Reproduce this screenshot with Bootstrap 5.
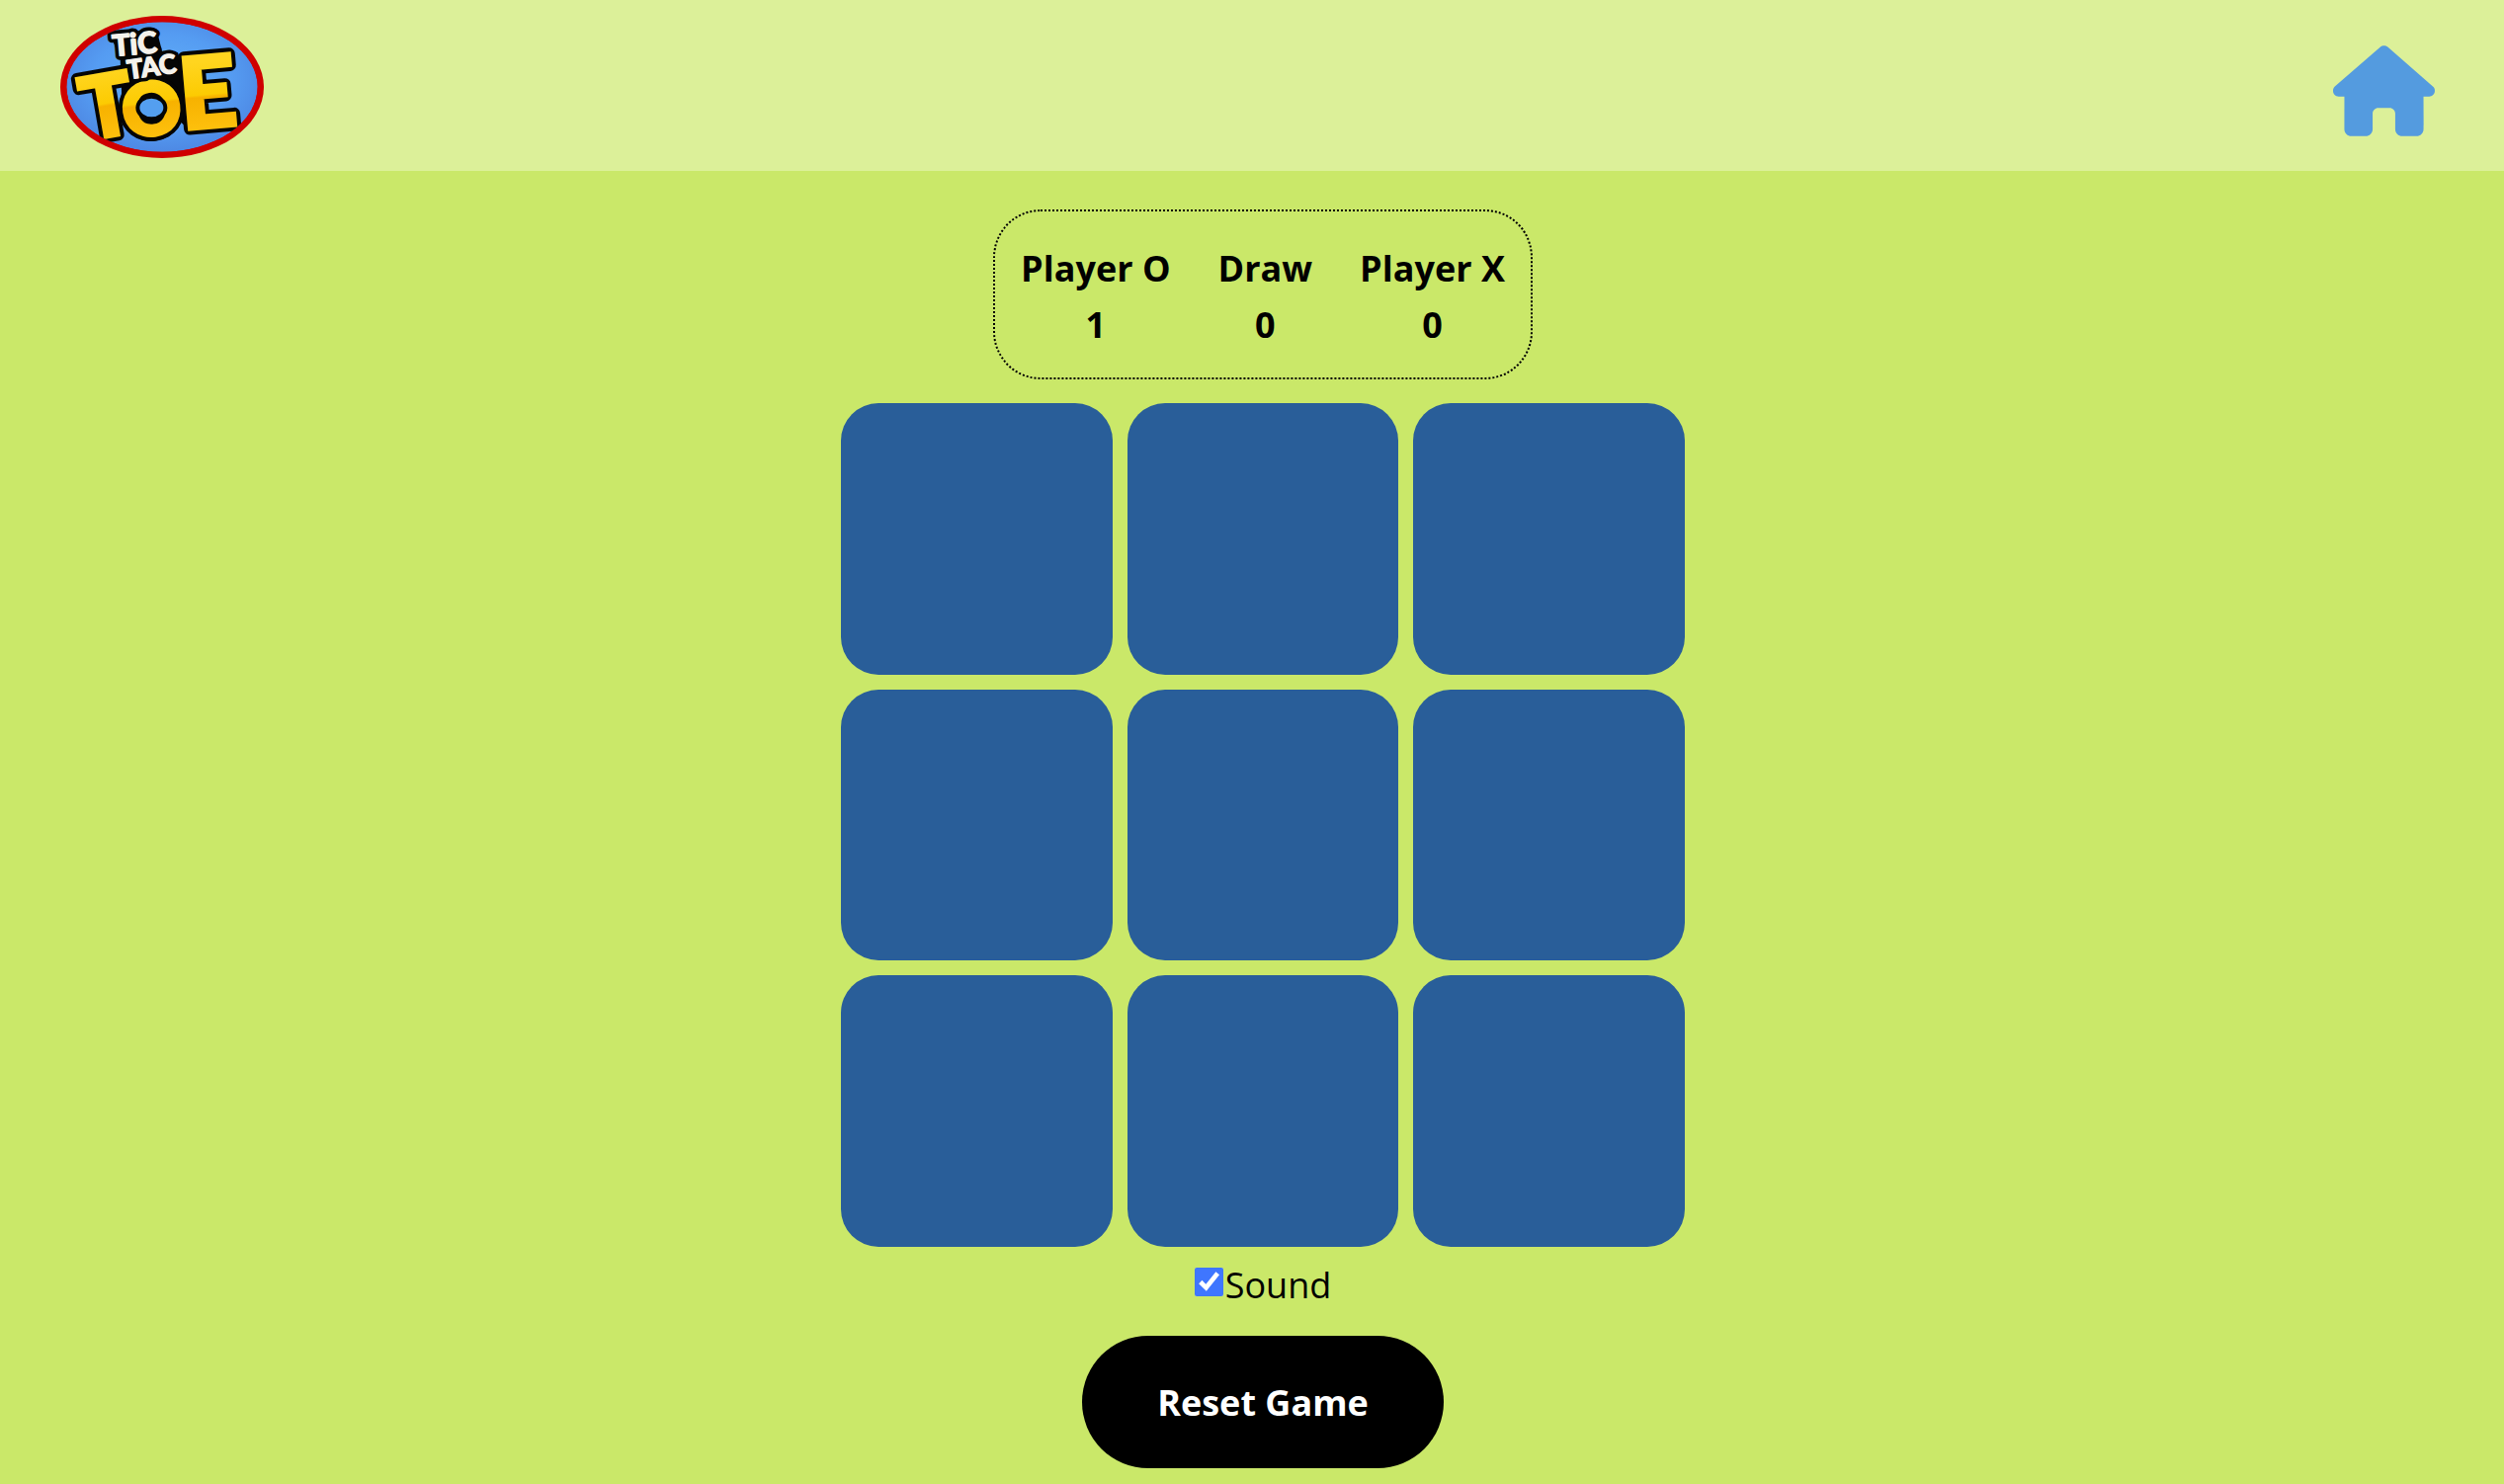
<!DOCTYPE html>
<html lang="en">
<head>
<meta charset="utf-8">
<meta name="viewport" content="width=device-width, initial-scale=1">
<title>Tic Tac Toe</title>
<link href="https://cdn.jsdelivr.net/npm/bootstrap@5.3.0/dist/css/bootstrap.min.css" rel="stylesheet">
<style>
  body { background: #cae869; color: #000; font-family: "Open Sans", "Noto Sans", sans-serif; font-size: 36px; line-height: 57px; }
  .top-bar { background: #dcf099; padding: 16px 70px 13px 61px; }
  .logo-badge { width: 206px; height: 144px; }
  .home-link { padding-top: 8px; }
  .home-icon { width: 103px; height: 92px; fill: #549bdf; }
  .game { padding: 39px 0 16px 22px; }
  .score-box { border: 2px dotted #000; border-radius: 48px; padding: 29px 2px 25px; margin-bottom: 24px; }
  .score-table { font-weight: 700; text-align: center; }
  .score-table th, .score-table td { padding: 0 24px; }
  .board { width: 854px; max-width: 100%; gap: 15px; grid-template-columns: repeat(3, 1fr); }
  .cell { aspect-ratio: 1; border: 0; border-radius: 38px; background: #295e99; }
  .sound-row { padding: 10px 0 23px; }
  .sound-check { width: 29px; height: 29px; margin: 11px 2px 0 0; accent-color: #3f76ff; }
  .reset { background: #000; color: #fff; font-weight: 700; font-size: 36px; line-height: 54px; padding: 41px 76px 39px; border: 0; }
  .reset:hover { background: #222; color: #fff; }
</style>
</head>
<body>
<header class="top-bar d-flex justify-content-between align-items-center">
  <a href="#" class="d-flex" aria-label="Tic Tac Toe">
    <svg class="logo-badge" viewBox="63 48 618 432" font-family="Lato, sans-serif" font-weight="900" text-anchor="middle">
      <defs>
        <radialGradient id="sky" cx=".5" cy=".45" r=".6"><stop offset="0" stop-color="#62b0f8"/><stop offset=".6" stop-color="#559cf2"/><stop offset="1" stop-color="#4c84e0"/></radialGradient>
        <linearGradient id="gold" gradientUnits="userSpaceOnUse" x1="0" y1="-200" x2="0" y2="0"><stop offset="0" stop-color="#ffd51f"/><stop offset=".5" stop-color="#fccb02"/><stop offset=".54" stop-color="#f7b200"/><stop offset="1" stop-color="#fdbf0c"/></linearGradient>
        <clipPath id="oval"><ellipse cx="372" cy="264" rx="290" ry="197"/></clipPath>
      </defs>
      <ellipse cx="372" cy="264" rx="309" ry="216" fill="#cf0000"/>
      <g clip-path="url(#oval)">
        <ellipse cx="372" cy="264" rx="290" ry="197" fill="url(#sky)"/>
        <path d="M215 105L355 88 372 155 420 160 450 390 350 300 250 300 245 180Z" fill="#050505"/>
        <g stroke="#050505" stroke-width="36" stroke-linejoin="round" fill="#050505">
          <text transform="translate(220 412) rotate(-10)" font-size="260">T</text>
          <text transform="translate(519 386) rotate(-5)" font-size="300">E</text>
          <text transform="translate(351 408) rotate(-8)" font-size="220">O</text>
        </g>
        <g fill="url(#gold)" stroke="url(#gold)" stroke-width="12" stroke-linejoin="miter">
          <text transform="translate(220 412) rotate(-10)" font-size="260">T</text>
          <text transform="translate(519 386) rotate(-5)" font-size="300">E</text>
          <text transform="translate(351 408) rotate(-8)" font-size="220" stroke="#050505" stroke-width="34" paint-order="stroke">O</text>
          <text transform="translate(351 408) rotate(-8)" font-size="220">O</text>
        </g>
        <ellipse cx="340" cy="327" rx="42" ry="34" fill="#549ff0" stroke="#050505" stroke-width="12"/>
        <g fill="#f5f2ec" stroke-linejoin="round">
          <g stroke="#050505" stroke-width="26">
            <text transform="translate(291 165) rotate(-5)" font-size="90">TiC</text>
            <text transform="translate(344 230) rotate(-8)" font-size="80">TAC</text>
          </g>
          <g stroke="#f5f2ec" stroke-width="4">
            <text transform="translate(291 165) rotate(-5)" font-size="90">TiC</text>
            <text transform="translate(344 230) rotate(-8)" font-size="80">TAC</text>
          </g>
        </g>
      </g>
    </svg>
  </a>
  <a href="#" class="home-link d-flex" aria-label="Home">
    <svg class="home-icon" viewBox="0 0 576 512"><path d="M575.8 255.5c0 18-15 32.1-32 32.1h-32l.7 160.2c0 2.700-.2 5.400-.5 8.100V472c0 22.100-17.900 40-40 40H456c-1.100 0-2.200 0-3.300-.1c-1.400 .1-2.800 .1-4.200 .1H416 392c-22.100 0-40-17.900-40-40V448 384c0-17.700-14.300-32-32-32H256c-17.700 0-32 14.300-32 32v64 24c0 22.100-17.900 40-40 40H160 128.100c-1.500 0-3-.1-4.500-.2c-1.200 .1-2.400 .2-3.600 .2H104c-22.100 0-40-17.900-40-40V360c0-.9 0-1.900 .1-2.800V287.600H32c-18 0-32-14-32-32.100c0-9 3-17 10-24L266.400 8c7-7 15-8 22-8s15 2 21 7L564.800 231.500c8 7 12 15 11 24z"/></svg>
  </a>
</header>
<main class="game d-flex flex-column align-items-center">
  <div class="score-box">
    <table class="score-table">
      <thead><tr><th scope="col">Player O</th><th scope="col">Draw</th><th scope="col">Player X</th></tr></thead>
      <tbody><tr><td>1</td><td>0</td><td>0</td></tr></tbody>
    </table>
  </div>
  <div class="board d-grid">
    <button type="button" class="cell" aria-label="Cell 1"></button>
    <button type="button" class="cell" aria-label="Cell 2"></button>
    <button type="button" class="cell" aria-label="Cell 3"></button>
    <button type="button" class="cell" aria-label="Cell 4"></button>
    <button type="button" class="cell" aria-label="Cell 5"></button>
    <button type="button" class="cell" aria-label="Cell 6"></button>
    <button type="button" class="cell" aria-label="Cell 7"></button>
    <button type="button" class="cell" aria-label="Cell 8"></button>
    <button type="button" class="cell" aria-label="Cell 9"></button>
  </div>
  <div class="sound-row d-flex">
    <input class="sound-check" type="checkbox" id="sound" checked>
    <label for="sound">Sound</label>
  </div>
  <button type="button" class="reset btn rounded-pill">Reset Game</button>
</main>
<script src="https://cdn.jsdelivr.net/npm/bootstrap@5.3.0/dist/js/bootstrap.bundle.min.js"></script>
</body>
</html>
